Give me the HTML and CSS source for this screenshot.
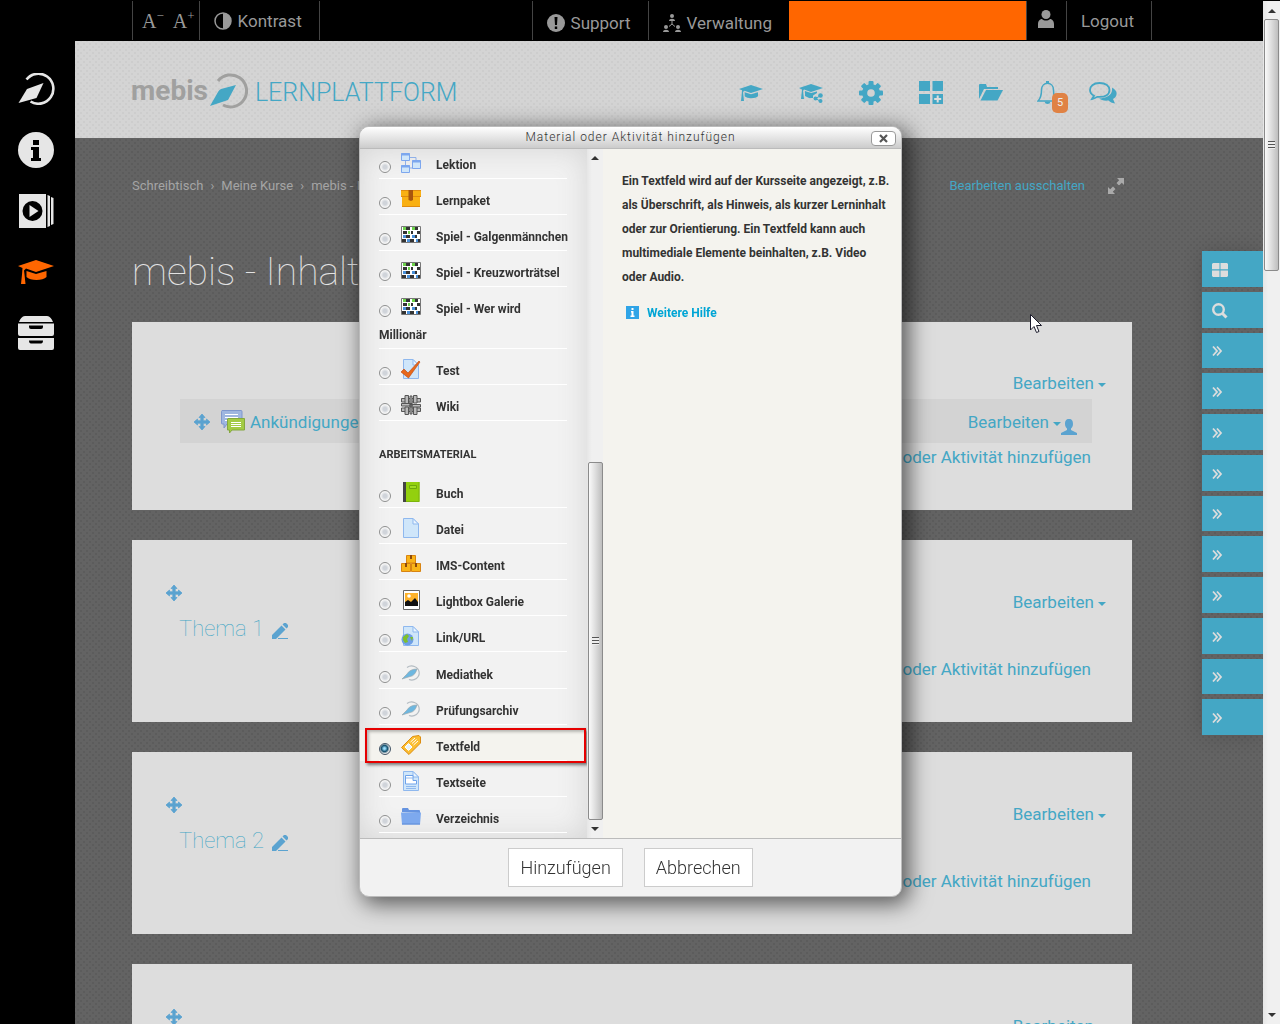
FILE: index.html
```html
<!DOCTYPE html>
<html lang="de">
<head>
    <meta charset="UTF-8">
    <meta name="viewport" content="width=device-width, initial-scale=1">
    <title>mebis Lernplattform</title>
    <link rel="stylesheet" href="styles.css">
</head>
<body>

<!-- Icons, die mehrfach gebraucht werden -->
<svg class="sprite" aria-hidden="true">
    <symbol id="i-compass" viewBox="0 0 36 32">
        <path d="M8 6.500A15 15 0 1 1 12 28.500" fill="none" stroke="currentColor" stroke-width="2.600"/>
        <path d="M25 10L18 25L0 30L8.500 16Z" fill="currentColor"/>
    </symbol>
    <symbol id="i-cap" viewBox="0 0 36 24">
        <path d="M18 0L36 6L18 12L8 8.500L6 10.500L6.500 14.500L7.500 24H3L4 14.500L4.500 8L0 6Z" fill="currentColor"/>
        <path d="M8.500 11L18 14L28.500 11V17C25 21 12 21 8.500 17Z" fill="currentColor"/>
    </symbol>
    <symbol id="i-move" viewBox="0 0 16 16">
        <path d="M8 0L11 3.500H9.200V6.800H12.500V5L16 8L12.500 11V9.200H9.200V12.500H11L8 16L5 12.500H6.800V9.200H3.500V11L0 8L3.500 5V6.800H6.800V3.500H5Z" fill="currentColor" stroke="currentColor" stroke-width=".8"/>
    </symbol>
    <symbol id="i-edit" viewBox="0 0 16 16">
        <path d="M0 16V12L9.500 2.500L13.500 6.500L4 16ZM10.500 1.500L12 0H14L16 2V4L14.500 5.500Z" fill="currentColor"/>
        <path d="M6 15.500H16" stroke="currentColor"/>
    </symbol>
    <symbol id="i-more" viewBox="0 0 16 16">
        <path d="M1 3.500L5 8L1 12.500M5 3.500L9 8L5 12.500" fill="none" stroke="currentColor" stroke-width="1.800"/>
    </symbol>
    <symbol id="i-game" viewBox="0 0 20 20">
        <path d="M.5 1.500H19.500V17.500H.5Z" fill="#fff" stroke="#777"/>
        <path d="M5 2H9V5H5ZM14 2H17V5H14ZM2 6H6V9H2ZM10 6H12V9H10ZM16 6H19V9H16ZM5 10H9V13H5ZM14 10H16V13H14ZM1 14H5V17H1ZM9 14H13V17H9ZM17 14H19V17H17Z" fill="#333"/>
        <path d="M2 2H5V5H2ZM11 2H14V5H11ZM7 6H9V9H7Z" fill="#6cd24a"/>
        <path d="M2 10H5V13H2ZM11 10H14V13H11ZM6 14H9V17H6ZM15 14H17V17H15Z" fill="#4a90d9"/>
    </symbol>
    <symbol id="i-page" viewBox="0 0 20 20">
        <path d="M2.500 .5H12L17.500 6V19.500H2.500Z" fill="#cfe6fa" stroke="#8fb8ee"/>
        <path d="M12 .5V6H17.500Z" fill="#eaf5ff" stroke="#8fb8ee"/>
    </symbol>
    <symbol id="i-medium" viewBox="0 0 20 20">
        <path d="M6 4.500A7.500 7 0 1 1 8 16.500" fill="none" stroke="#b4bcc2" stroke-width="1.200"/>
        <path d="M16 6Q14 13 9 13.500L1 16L6 11Q9 6 16 6Z" fill="#6db7e0" stroke="#9aa7ae" stroke-width=".7"/>
    </symbol>
</svg>

<header class="topbar">
    <div class="topbar-group">
        <div class="topbar-item fontsize">
            <button type="button" aria-label="Schrift kleiner">A<sup>−</sup></button>
            <button type="button" aria-label="Schrift größer">A<sup>+</sup></button>
        </div>
        <button type="button" class="topbar-item contrast">
            <svg width="18" height="18" viewBox="0 0 18 18"><circle cx="9" cy="9" r="8" fill="none" stroke="currentColor" stroke-width="1.500"/><path d="M9 1A8 8 0 0 1 9 17Z" fill="currentColor"/></svg>
            Kontrast
        </button>
    </div>
    <div class="topbar-group">
        <a href="#" class="topbar-item support">
            <svg width="18" height="18" viewBox="0 0 18 18"><circle cx="9" cy="9" r="9" fill="currentColor"/><path d="M7.500 3H10.500L10 11H8ZM7.800 12.500H10.200V15H7.800Z" fill="#000"/></svg>
            Support
        </a>
        <a href="#" class="topbar-item support">
            <svg width="18" height="18" viewBox="0 0 18 18" fill="currentColor"><circle cx="9" cy="2" r="2"/><path d="M6 7C6 4 12 4 12 7Z"/><circle cx="3" cy="13" r="2"/><path d="M0 18C0 15 6 15 6 18Z"/><circle cx="15" cy="13" r="2"/><path d="M12 18C12 15 18 15 18 18Z"/><path d="M9 7V10L6 12.500M9 10L12 12.500" fill="none" stroke="currentColor"/></svg>
            Verwaltung
        </a>
        <div class="topbar-user"></div>
        <a href="#" class="topbar-item profile" aria-label="Profil">
            <svg width="16" height="18" viewBox="0 0 16 18" fill="currentColor"><circle cx="8" cy="4.500" r="4.500"/><path d="M0 18V14C0 10 3 9 4 9C6 11 10 11 12 9C13 9 16 10 16 14V18Z"/></svg>
        </a>
        <a href="#" class="topbar-item">Logout</a>
    </div>
</header>

<div class="layout">
    <nav class="sidebar">
        <a href="#" aria-label="mebis"><svg width="37" height="32"><use href="#i-compass"/></svg></a>
        <a href="#" aria-label="Infoportal"><svg width="36" height="36" viewBox="0 0 36 36"><circle cx="18" cy="18" r="18" fill="currentColor"/><path d="M15 8H21V13H15ZM13 15H21V26H23V29H13V26H15V18H13Z" fill="#000"/></svg></a>
        <a href="#" aria-label="Mediathek"><svg width="36" height="34" viewBox="0 0 36 34"><path d="M1 0H28V34H1ZM29.500 1L32 2V32L29.500 33ZM33 3L35.500 4V30L33 31Z" fill="currentColor"/><circle cx="14.500" cy="17" r="10" fill="#000"/><path d="M11.500 11L20.500 17L11.500 23Z" fill="currentColor"/></svg></a>
        <a href="#" class="active" aria-label="Lernplattform"><svg width="36" height="24"><use href="#i-cap"/></svg></a>
        <a href="#" aria-label="Prüfungsarchiv"><svg width="36" height="34" viewBox="0 0 36 34"><path d="M1 6C3 1 5 0 8 0H28C31 0 33 1 35 6ZM0 7.500H36V18Q36 20 34 20H2Q0 20 0 18ZM0 22H36V32Q36 34 34 34H2Q0 34 0 32Z" fill="currentColor"/><path d="M11 9.500H25V11Q25 13 23 13H13Q11 13 11 11ZM11 24.500H25Q25 27.500 23 27.500H13Q11 27.500 11 24.500Z" fill="#000"/></svg></a>
    </nav>

    <main class="page">
        <div class="page-header">
            <a href="#" class="logo">
                <span class="logo-name">mebis</span>
                <svg width="39" height="36" viewBox="0 0 39 36"><path d="M9 8A16 16 0 1 1 14 32" fill="none" stroke="#a0a09f" stroke-width="3"/><path d="M27 12L19 27L1 33L9 19Q10 17 12 16Z" fill="#44a7c5"/></svg>
                <span class="logo-title">LERNPLATTFORM</span>
            </a>
            <nav class="tools">
                <a href="#" aria-label="Kurse"><svg width="24" height="16"><use href="#i-cap"/></svg></a>
                <a href="#" aria-label="Kurse teilen"><svg width="24" height="20" viewBox="0 0 24 20"><path d="M12 1L24 5L12 9L5 6.500L4 8L5 16H2L3 6.500L0 5Z" fill="currentColor"/><path d="M6 8L12 10L18 8.500V10L14 12.500V15H10L6 13Z" fill="currentColor"/><circle cx="21.500" cy="12.500" r="2.300" fill="currentColor"/><circle cx="21.500" cy="18" r="2" fill="currentColor"/><circle cx="16.500" cy="15.500" r="2" fill="currentColor"/><path d="M21 18L16.500 15.500L21 13" fill="none" stroke="currentColor"/></svg></a>
                <a href="#" aria-label="Einstellungen"><svg width="24" height="24" viewBox="0 0 24 24"><g fill="currentColor"><rect x="9.500" y="0" width="5" height="24" rx="1"/><rect x="9.500" y="0" width="5" height="24" rx="1" transform="rotate(45 12 12)"/><rect x="9.500" y="0" width="5" height="24" rx="1" transform="rotate(90 12 12)"/><rect x="9.500" y="0" width="5" height="24" rx="1" transform="rotate(135 12 12)"/><circle cx="12" cy="12" r="9"/></g><circle cx="12" cy="12" r="3.800" fill="#d2d2d2"/></svg></a>
                <a href="#" aria-label="Block hinzufügen"><svg width="24" height="24" viewBox="0 0 24 24"><path d="M0 0H11V10H0ZM13.500 0H24V10H13.500ZM0 13H11V23H0ZM13.500 13H24V23H13.500Z" fill="currentColor"/><path d="M18.700 14.500V21.500M15.200 18H22.200" stroke="#ddd" stroke-width="2"/></svg></a>
                <a href="#" aria-label="Dateien"><svg width="24" height="17" viewBox="0 0 24 17"><path d="M0 15V1Q0 0 1 0H7L8 3H19V5H5Z" fill="currentColor"/><path d="M7 6H24L18.500 16.500H1.500Z" fill="currentColor"/></svg></a>
                <a href="#" class="bell" aria-label="Mitteilungen"><svg width="21" height="24" viewBox="0 0 21 24"><path d="M1 20C4 17 4.500 14 4.500 9C4.500 0 16.500 0 16.500 9C16.500 14 17 17 20 20Z" fill="none" stroke="currentColor" stroke-width="1.500"/><path d="M7.500 20.500H13.500Q13 23 10.500 23Q8 23 7.500 20.500ZM9 0H12V3H9Z" fill="currentColor"/></svg><span class="badge">5</span></a>
                <a href="#" aria-label="Nachrichten"><svg width="28" height="22" viewBox="0 0 28 22"><path d="M10.500 1C4 1 1 4.500 1 8C1 10.500 2.500 12.500 5 13.800L3 17C6 16.500 8 15 8.500 14.800C17 15.500 20.500 12 20.500 8C20.500 4 17 1 10.500 1Z" fill="none" stroke="currentColor" stroke-width="1.800"/><path d="M23 5.500C29.500 9 28.500 14.500 24 17L26 21.500C23 21 21 20 19.500 18.500C15 19 12 18 10 16.500C18 16.500 24 13 23 5.500Z" fill="currentColor"/></svg></a>
            </nav>
        </div>

        <div class="content">
            <div class="crumbs">
                <nav>
                    <a href="#">Schreibtisch</a><span>›</span><a href="#">Meine Kurse</a><span>›</span><a href="#">mebis - Inhalt</a>
                </nav>
                <div class="crumbs-tools">
                    <a href="#">Bearbeiten ausschalten</a>
                    <button type="button" aria-label="Vollbild"><svg width="16" height="16" viewBox="0 0 16 16"><path d="M9 0H16V7L13.800 4.800L11 7.500L8.500 5L11.200 2.200ZM0 16V9L2.200 11.200L5 8.500L7.500 11L4.800 13.800L7 16Z" fill="currentColor"/></svg></button>
                </div>
            </div>

            <h1>mebis - Inhalt</h1>

            <section class="card">
                <div class="general">
                    <a href="#" class="edit">Bearbeiten</a>
                </div>
                <div class="activity">
                    <svg class="blue" width="16" height="16"><use href="#i-move"/></svg>
                    <svg class="forum" width="24" height="24" viewBox="0 0 24 24"><path d="M1 .5H20Q21 .5 21 1.500V14H6L3 18V14H1Q.5 14 .5 13V1.500Z" fill="#9fb6e0" stroke="#7f97cd"/><path d="M4 4.500H17M4 7.500H17M4 10.500H8" stroke="#fff"/><path d="M7 8.500H23.500V20H11L8.500 23V20H6.500V9Z" fill="#a3cb45" stroke="#84a83e"/><path d="M10 12.500H20M10 14.500H20M10 16.500H20" stroke="#fff"/></svg>
                    <a href="#">Ankündigungen</a>
                    <a href="#" class="edit push">Bearbeiten</a>
                    <svg class="blue person" width="16" height="16" viewBox="0 0 16 16"><path d="M8 0C11 0 12 2 12 5C12 7 11 8.500 10 9.500V11L16 14V16H0V14L6 11V9.500C5 8.500 4 7 4 5C4 2 5 0 8 0Z" fill="currentColor"/></svg>
                </div>
                <a href="#" class="add">Material oder Aktivität hinzufügen</a>
            </section>

            <section class="card topic">
                <div class="topic-head">
                    <div>
                        <svg class="blue" width="16" height="16"><use href="#i-move"/></svg>
                        <h3>Thema 1 <svg class="blue" width="16" height="16"><use href="#i-edit"/></svg></h3>
                    </div>
                    <a href="#" class="edit">Bearbeiten</a>
                </div>
                <a href="#" class="add">Material oder Aktivität hinzufügen</a>
            </section>

            <section class="card topic">
                <div class="topic-head">
                    <div>
                        <svg class="blue" width="16" height="16"><use href="#i-move"/></svg>
                        <h3>Thema 2 <svg class="blue" width="16" height="16"><use href="#i-edit"/></svg></h3>
                    </div>
                    <a href="#" class="edit">Bearbeiten</a>
                </div>
                <a href="#" class="add">Material oder Aktivität hinzufügen</a>
            </section>

            <section class="card topic">
                <div class="topic-head">
                    <div>
                        <svg class="blue" width="16" height="16"><use href="#i-move"/></svg>
                    </div>
                    <a href="#" class="edit">Bearbeiten</a>
                </div>
            </section>
        </div>
    </main>
</div>

<aside class="dock">
    <button type="button" aria-label="Blöcke"><svg width="16" height="14" viewBox="0 0 16 14"><path d="M1 0H7.500V6.300H0V1ZM8.500 0H15L16 1V6.300H8.500ZM0 7.500H7.500V14H1L0 13ZM8.500 7.500H16V13L15 14H8.500Z" fill="currentColor"/></svg></button>
    <button type="button" aria-label="Suche"><svg width="16" height="16" viewBox="0 0 16 16"><circle cx="6.500" cy="6.500" r="5.300" fill="none" stroke="currentColor" stroke-width="2.400"/><path d="M10.500 10.500L14.500 14.500" stroke="currentColor" stroke-width="3"/></svg></button>
    <button type="button" aria-label="Block 1"><svg width="16" height="16"><use href="#i-more"/></svg></button>
    <button type="button" aria-label="Block 2"><svg width="16" height="16"><use href="#i-more"/></svg></button>
    <button type="button" aria-label="Block 3"><svg width="16" height="16"><use href="#i-more"/></svg></button>
    <button type="button" aria-label="Block 4"><svg width="16" height="16"><use href="#i-more"/></svg></button>
    <button type="button" aria-label="Block 5"><svg width="16" height="16"><use href="#i-more"/></svg></button>
    <button type="button" aria-label="Block 6"><svg width="16" height="16"><use href="#i-more"/></svg></button>
    <button type="button" aria-label="Block 7"><svg width="16" height="16"><use href="#i-more"/></svg></button>
    <button type="button" aria-label="Block 8"><svg width="16" height="16"><use href="#i-more"/></svg></button>
    <button type="button" aria-label="Block 9"><svg width="16" height="16"><use href="#i-more"/></svg></button>
    <button type="button" aria-label="Block 10"><svg width="16" height="16"><use href="#i-more"/></svg></button>
</aside>

<div class="overlay">
    <form class="dialog" role="dialog" aria-labelledby="dialogTitle">
        <div class="dialog-title">
            <h2 id="dialogTitle">Material oder Aktivität hinzufügen</h2>
            <button type="button" class="close" aria-label="Schließen"><svg width="9" height="9" viewBox="0 0 9 9"><path d="M1 1L8 8M8 1L1 8" stroke="#555" stroke-width="2.200"/></svg></button>
        </div>

        <div class="dialog-body">
            <div class="chooser">
                <div class="group activities">
                    <label class="option"><input type="radio" name="module"><svg width="20" height="20" viewBox="0 0 20 20"><path d="M9 4.500H15V8M4.500 8V12M9 15H12V9" fill="none" stroke="#8fb0e8"/><path d="M.5 .5H8.500V7.500H.5ZM11.500 7.500H19.500V15.500H11.500ZM.5 12.500H8.500V19.500H.5Z" fill="#cfe6fa" stroke="#7da7ee"/><path d="M0 1.500H9M11 8.500H20M0 13.500H9" stroke="#7da7ee" stroke-width="2"/></svg>Lektion</label>
                    <label class="option"><input type="radio" name="module"><svg width="20" height="20" viewBox="0 0 20 20"><path d="M0 1H20V8H19V18H1V8H0Z" fill="#f9b013"/><path d="M0 7.500H20M1 17.500H19M0 1.500H20" stroke="#e08b10"/><path d="M7.500 1H12V11L10 12L7.500 11Z" fill="#a8560f"/></svg>Lernpaket</label>
                    <label class="option"><input type="radio" name="module"><svg width="20" height="20"><use href="#i-game"/></svg>Spiel - Galgenmännchen</label>
                    <label class="option"><input type="radio" name="module"><svg width="20" height="20"><use href="#i-game"/></svg>Spiel - Kreuzworträtsel</label>
                    <label class="option"><input type="radio" name="module"><svg width="20" height="20"><use href="#i-game"/></svg>Spiel - Wer wird<br>Millionär</label>
                    <label class="option"><input type="radio" name="module"><svg width="20" height="20"><use href="#i-page"/><path d="M0 13L3 10L7 14L18 2L19 3L7.500 19Z" fill="#e8681c" stroke="#b8450c" stroke-width=".6"/></svg>Test</label>
                    <label class="option"><input type="radio" name="module"><svg width="20" height="20" viewBox="0 0 20 20"><g fill="#bbb" stroke="#555"><path d="M.5 3.500H19.500V7H.5ZM.5 13H19.500V16.500H.5Z"/><path d="M4 .5H7.500V10H4ZM12.500 10H16V19.500H12.500ZM4 12H7.500V19.500H4ZM12.500 .5H16V8H12.500Z"/><path d="M.5 8.500H11V11H.5ZM9 9.500H19.500V12H9ZM9 1H11V19H9Z"/></g></svg>Wiki</label>
                </div>

                <h4>ARBEITSMATERIAL</h4>

                <div class="group resources">
                    <label class="option"><input type="radio" name="module"><svg width="20" height="20" viewBox="0 0 20 20"><path d="M2 0H6V20H2Z" fill="#444"/><path d="M5 0H18.500V20H5Z" fill="#93d00e"/><path d="M8.500 3.500H15.500V6.500H8.500Z" fill="#9fdc22" stroke="#6ea80b"/><path d="M5 19.500H18V0" fill="none" stroke="#7cb40c"/></svg>Buch</label>
                    <label class="option"><input type="radio" name="module"><svg width="20" height="20"><use href="#i-page"/></svg>Datei</label>
                    <label class="option"><input type="radio" name="module"><svg width="20" height="20" viewBox="0 0 20 20"><path d="M5.500 1.500H14.500V9H5.500ZM.5 9.500H9.500V17.500H.5ZM10.500 9.500H19.500V17.500H10.500Z" fill="#f9b418" stroke="#d88412"/><path d="M10 1V5M5 9V13M15 9V13" stroke="#8d4a0c" stroke-width="2"/></svg>IMS-Content</label>
                    <label class="option"><input type="radio" name="module"><svg width="20" height="20" viewBox="0 0 20 20"><path d="M2.500 .5H18.500V19.500H2.500Z" fill="#fff" stroke="#666"/><path d="M4 3H17V16H4Z" fill="#fdb22b"/><circle cx="8" cy="6" r="1.800" fill="#fff"/><path d="M4 16V12L7 10L10 12L14 8L17 12V16Z" fill="#111"/></svg>Lightbox Galerie</label>
                    <label class="option"><input type="radio" name="module"><svg width="20" height="20"><use href="#i-page"/><circle cx="6.500" cy="13.500" r="6" fill="#6f9fe6"/><path d="M2 11L6 8L8 10L6 13L7 16L4 17L2 14ZM9 11L12 11L11 15Z" fill="#7fc02c"/></svg>Link/URL</label>
                    <label class="option"><input type="radio" name="module"><svg width="20" height="20"><use href="#i-medium"/></svg>Mediathek</label>
                    <label class="option"><input type="radio" name="module"><svg width="20" height="20"><use href="#i-medium"/></svg>Prüfungsarchiv</label>
                    <label class="option selected"><input type="radio" name="module" checked><svg width="20" height="20" viewBox="0 0 20 20"><path d="M11.500 1.500L18 .5L19.500 2V8L8 19.500L.5 12.500Z" fill="#fbbd2f" stroke="#dc8d12"/><path d="M4 12L7.500 8.500L11 12L7.500 15.500Z" fill="#e9f2f5" stroke="#fff"/><path d="M9.500 7L14 3M11 8.500L15.500 4.500M12.500 10L17 6" stroke="#fff"/></svg>Textfeld</label>
                    <label class="option"><input type="radio" name="module"><svg width="20" height="20"><use href="#i-page"/><path d="M4.500 4.500H12V9.500H15.500V13H4.500Z" fill="#fff" stroke="#6ea2ea"/><path d="M5 7H12M5 15.500H15M5 17.500H15" stroke="#8fb8ee"/></svg>Textseite</label>
                    <label class="option"><input type="radio" name="module"><svg width="20" height="20" viewBox="0 0 20 20"><path d="M1 5V2Q1 1 2 1H7L8 3H18Q19 3 19 4V6Z" fill="#6694e0"/><path d="M0 5.500H20L19 17.500H1Z" fill="#7da9ee"/><path d="M1 17H19" stroke="#5e8cd8"/></svg>Verzeichnis</label>
                </div>
            </div>

            <div class="scrollbar list-scroll" aria-hidden="true">
                <i class="arrow up"></i>
                <span class="thumb"><i class="grip"></i></span>
                <i class="arrow"></i>
            </div>

            <div class="help">
                <p>Ein Textfeld wird auf der Kursseite angezeigt, z.B.<br>
                als Überschrift, als Hinweis, als kurzer Lerninhalt<br>
                oder zur Orientierung. Ein Textfeld kann auch<br>
                multimediale Elemente beinhalten, z.B. Video<br>
                oder Audio.</p>
                <a href="#"><svg width="13" height="13" viewBox="0 0 13 13"><path d="M0 0H13V13H0Z" fill="#2fa4e7"/><path d="M5.500 2H7.500V4H5.500ZM5 5H7.500V9.500H8.500V11H4.500V9.500H5.500V6.500H5Z" fill="#fff"/></svg>Weitere Hilfe</a>
            </div>
        </div>

        <div class="dialog-footer">
            <button type="submit">Hinzufügen</button>
            <button type="button">Abbrechen</button>
        </div>
    </form>
</div>

<div class="scrollbar page-scroll" aria-hidden="true">
    <i class="arrow up"></i>
    <span class="thumb"><i class="grip"></i></span>
    <i class="arrow"></i>
</div>

<svg class="cursor" width="12" height="20" viewBox="0 0 12 20" aria-hidden="true"><path d="M.5 .5V16L4 12.500L6.500 18.500L9 17.500L6.500 11.500H11.500Z" fill="#fff" stroke="#1b1b2b"/></svg>

</body>
</html>
```

FILE: styles.css
```css
* {
    box-sizing: border-box;
}
body {
    margin: 0;
    height: 100vh;
    display: flex;
    flex-direction: column;
    overflow: hidden;
    background: #000;
    color: #333;
    font-family: Roboto, "Open Sans", sans-serif;
    font-size: 17px;
    line-height: 24px;
}
a {
    color: #44a7c5;
    text-decoration: none;
}
button {
    font: inherit;
    color: inherit;
    background: none;
    border: 0;
    padding: 0;
    cursor: pointer;
}
h1, h2, h3, h4, p {
    margin: 0;
}
svg {
    flex: none;
}
.sprite {
    position: absolute;
    width: 0;
    height: 0;
}

/* obere Leiste */
.topbar {
    flex: none;
    display: flex;
    justify-content: space-between;
    height: 41px;
    padding: 1px 128px 1px 132px;
    color: #999;
}
.topbar-group {
    display: flex;
}
.topbar-item {
    display: flex;
    align-items: center;
    gap: 6px;
    padding: 0 17px 0 14px;
    color: #999;
    border-left: 1px solid #444;
}
.topbar-group > :last-child {
    border-right: 1px solid #444;
}
.support {
    padding-top: 4px;
}
.fontsize {
    gap: 9px;
    padding: 0 4px 0 9px;
    font: 400 20px/24px "Liberation Serif", serif;
}
.fontsize button {
    display: flex;
    align-items: flex-start;
}
.fontsize sup {
    font-size: 13px;
    line-height: 14px;
}
.topbar-user {
    width: 237px;
    background: #ff6600;
}
.profile {
    padding: 0 12px 4px 11px;
}

.layout {
    flex: 1;
    min-height: 0;
    display: flex;
    padding-right: 17px;
}
.sidebar {
    flex: none;
    width: 75px;
    padding: 17px 3px 0 0;
}
.sidebar a {
    display: flex;
    align-items: center;
    justify-content: center;
    height: 61px;
    color: #e6e6e6;
}
.sidebar .active {
    color: #ff6600;
}

.page {
    flex: 1;
    min-width: 0;
    overflow: hidden;
    background-color: #636363;
    background-image: radial-gradient(#5c5c5c 1px, transparent 1px), radial-gradient(#5c5c5c 1px, transparent 1px);
    background-size: 6px 6px;
    background-position: 0 0, 3px 3px;
}
.page-header {
    display: flex;
    justify-content: space-between;
    align-items: center;
    height: 97px;
    padding: 2px 146px 0 56px;
    background-color: #d4d4d4;
    background-image: radial-gradient(#cdcdcd 1px, transparent 1px), radial-gradient(#cdcdcd 1px, transparent 1px);
    background-size: 6px 6px;
    background-position: 0 0, 3px 3px;
}
.logo {
    display: flex;
    align-items: center;
    gap: 1px;
}
.logo-name {
    color: #a0a09f;
    font-size: 28px;
    font-weight: 700;
    line-height: 36px;
}
.logo-title {
    padding: 4px 0 0 6px;
    font-size: 25px;
    font-weight: 300;
}
.tools {
    display: flex;
    align-items: center;
    gap: 36px;
    padding-top: 4px;
}
.tools a {
    display: flex;
}
.tools .bell {
    position: relative;
    margin: 0 -5px 0 -2px;
}
.badge {
    position: absolute;
    left: 15px;
    top: 12px;
    width: 16px;
    border-radius: 5px;
    background: #e08244;
    color: #eee;
    font-size: 11px;
    line-height: 20px;
    text-align: center;
}

.content {
    max-width: 1057px;
    padding-left: 57px;
}
.crumbs {
    display: flex;
    justify-content: space-between;
    padding: 36px 8px 0 0;
    font-size: 13px;
}
.crumbs nav, .crumbs nav a {
    color: #a5a5a5;
}
.crumbs span {
    margin: 0 7px;
}
.crumbs-tools {
    display: flex;
    align-items: center;
    gap: 23px;
    color: #aaa;
}
.crumbs button {
    display: flex;
}
h1 {
    margin: 50px 0 26px;
    color: #e3e3e3;
    font-size: 39px;
    font-weight: 100;
    line-height: 48px;
    white-space: nowrap;
}

.card {
    margin-bottom: 30px;
    padding: 45px 26px 41px 34px;
    background: #ddd;
}
.general {
    padding: 4px 0;
    text-align: right;
}
.edit::after {
    content: "";
    display: inline-block;
    margin-left: 4px;
    border: 4px solid transparent;
    border-top-color: currentColor;
    border-bottom: 0;
    vertical-align: 2px;
}
.blue {
    color: #5ba3d0;
}
.activity {
    display: flex;
    align-items: center;
    height: 44px;
    margin: 0 14px 2px;
    padding: 2px 15px 0 14px;
    background: #d3d3d3;
}
.forum {
    margin: 0 5px 0 11px;
}
.push {
    margin-left: auto;
}
.person {
    margin-top: 10px;
}
.add {
    display: block;
    padding-right: 15px;
    text-align: right;
}
.topic-head {
    display: flex;
    justify-content: space-between;
    margin-bottom: 10px;
}
.topic-head > div > svg {
    display: block;
}
.topic-head .edit {
    margin-top: 5px;
}
h3 {
    margin-top: 10px;
    padding-left: 13px;
    color: #44a7c5;
    font-size: 22px;
    font-weight: 100;
    line-height: 36px;
}
h3 svg {
    margin-left: 3px;
    vertical-align: -3px;
}

/* Blöcke am rechten Rand */
.dock {
    position: fixed;
    right: 17px;
    top: 251px;
    display: grid;
    grid-auto-rows: 1fr;
    gap: 5px;
    width: 61px;
    height: 484px;
    box-shadow: 0 0 20px rgba(0, 0, 0, .15);
}
.dock button {
    display: flex;
    align-items: center;
    padding: 2px 0 0 10px;
    background: #44a7c5;
    color: #ddd;
}

/* Dialog */
.overlay {
    position: fixed;
    inset: 0 17px 0 0;
    display: flex;
    align-items: center;
    justify-content: center;
    padding: 0 2px 2px 0;
}
.dialog {
    display: flex;
    flex-direction: column;
    width: 543px;
    height: 771px;
    border: 1px solid #bbb;
    border-radius: 10px;
    background: #f2f2f2;
    box-shadow: 5px 5px 22px 2px rgba(0, 0, 0, .6);
    overflow: hidden;
}
.dialog-title {
    flex: none;
    display: flex;
    align-items: center;
    height: 22px;
    padding: 0 5px 0 30px;
    border-bottom: 1px solid #bbb;
    background: linear-gradient(#fff, #ccc);
}
h2 {
    flex: 1;
    font-size: 12px;
    font-weight: 300;
    letter-spacing: 1px;
    line-height: 20px;
    text-align: center;
}
.close {
    display: flex;
    align-items: center;
    justify-content: center;
    width: 25px;
    height: 15px;
    margin-top: 3px;
    border: 1px solid #999;
    border-radius: 4px;
    background: #fff;
}
.dialog-body {
    flex: 1;
    min-height: 0;
    display: flex;
    font-size: 12px;
    font-weight: 700;
}
.chooser {
    flex: none;
    display: flex;
    flex-direction: column;
    width: 227px;
    padding-bottom: 4px;
    overflow: hidden;
    background: #f2f2f2;
    box-shadow: inset 0 0 30px #d4d4d4;
}
.activities {
    margin-top: -6px;
}
.resources {
    flex: 1;
    display: grid;
    grid-auto-rows: 1fr;
}
.option {
    position: relative;
    display: block;
    min-height: 36px;
    padding: 9px 0 0 19px;
    line-height: 26px;
    white-space: nowrap;
    cursor: pointer;
}
.option::after {
    content: "";
    display: block;
    width: 188px;
    border-bottom: 1px solid #fff;
}
.option svg {
    margin: 0 15px 0 10px;
    vertical-align: -4px;
}
.option input {
    appearance: none;
    width: 12px;
    height: 12px;
    margin: 0;
    border: 1px solid #8e8f8f;
    border-radius: 50%;
    background: radial-gradient(#d0d4da 25%, #f6f6f6 60%);
    vertical-align: -4px;
}
.option input:checked {
    border-color: #456;
    background: radial-gradient(circle at 45% 45%, #9be0ff 10%, #14506e 40%, #e8e8e8 65%);
}
.selected {
    background: linear-gradient(#f4f3ee, #f4f3ee) 0 5px / 100% 32px no-repeat;
}
.selected::before {
    content: "";
    position: absolute;
    inset: 3px 1px -2px 5px;
    z-index: 1;
    border: 2px solid #e60000;
    box-shadow: 2px 2px 3px rgba(0, 0, 0, .5), inset 2px 2px 3px rgba(0, 0, 0, .25);
}
h4 {
    flex: none;
    padding: 22px 0 5px 19px;
    font-size: 11px;
    line-height: 24px;
}
.help {
    flex: 1;
    padding: 20px 0 0 19px;
    background: #f4f3ee;
    white-space: nowrap;
}
.help a {
    display: flex;
    align-items: center;
    gap: 8px;
    margin-top: 12px;
    padding-left: 4px;
    color: #00a5d5;
}
.dialog-footer {
    flex: none;
    display: flex;
    justify-content: center;
    gap: 21px;
    padding: 9px 0;
    border-top: 1px solid #bbb;
}
.dialog-footer button {
    padding: 0 11px;
    border: 1px solid #ccc;
    background: #fff;
    font-size: 18px;
    font-weight: 300;
    line-height: 37px;
}

/* Bildlaufleisten */
.scrollbar {
    flex: none;
    display: flex;
    flex-direction: column;
    align-items: center;
    background: linear-gradient(90deg, #e6e6e6, #f0f0f0 30%);
}
.list-scroll {
    width: 16px;
    padding: 7px 0;
}
.page-scroll {
    position: fixed;
    right: 0;
    top: 1px;
    bottom: 0;
    width: 17px;
    padding: 8px 0 7px;
}
.arrow {
    border: 4px solid transparent;
    border-top-color: #333;
    border-bottom: 0;
}
.arrow.up {
    transform: rotate(180deg);
}
.thumb {
    display: flex;
    align-items: center;
    justify-content: center;
    width: 15px;
    border: 1px solid #8b8b8b;
    border-radius: 2px;
    background: linear-gradient(90deg, #fafafa, #ddd 50%, #bebebe);
}
.list-scroll .thumb {
    height: 358px;
    margin: auto 0 7px;
}
.page-scroll .thumb {
    height: 252px;
    margin: 6px 0 auto;
}
.grip {
    width: 7px;
    height: 8px;
    background: repeating-linear-gradient(#555 0 1px, #eee 1px 3px);
}
.cursor {
    position: fixed;
    left: 1030px;
    top: 314px;
}
```
